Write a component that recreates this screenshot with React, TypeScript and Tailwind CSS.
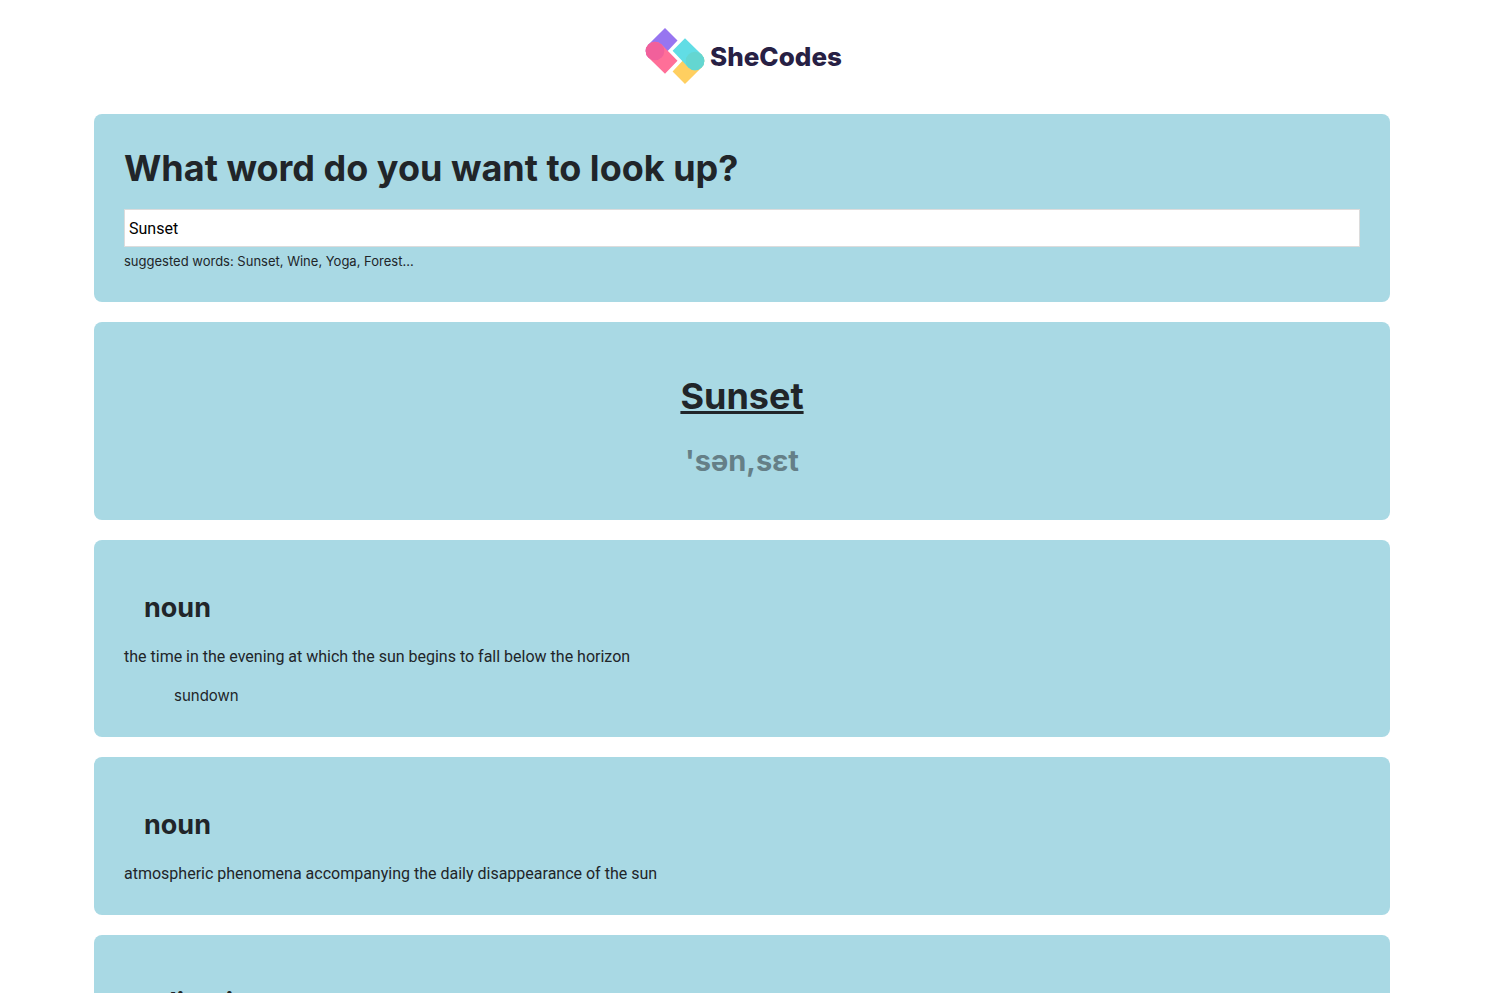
import { useState } from "react";

type Meaning = {
  partOfSpeech: string;
  definition: string;
  synonyms: string[];
};

const meanings: Meaning[] = [
  {
    partOfSpeech: "noun",
    definition:
      "the time in the evening at which the sun begins to fall below the horizon",
    synonyms: ["sundown"],
  },
  {
    partOfSpeech: "noun",
    definition:
      "atmospheric phenomena accompanying the daily disappearance of the sun",
    synonyms: [],
  },
  { partOfSpeech: "adjective", definition: "", synonyms: [] },
];

function Logo() {
  return (
    <div className="flex items-center gap-[5px] pl-[3px]">
      <svg viewBox="0 0 60 56" className="h-14 w-[60px]" aria-hidden="true">
        <path
          d="M20 0 L32.5 12.5 L16.6 29.6 A9.3 9.3 0 0 1 3.4 16.4 Z"
          fill="#9775f0"
        />
        <path
          d="M3.4 29.6 A9.3 9.3 0 0 1 16.6 16.4 L32.5 32.8 L20 45.8 Z"
          fill="#ff6f98"
        />
        <circle cx="10" cy="23" r="9.3" fill="#f1609b" />
        <path
          d="M40 56 L27.6 43.6 L43.4 26.4 A9.3 9.3 0 0 1 56.6 39.6 Z"
          fill="#ffcf60"
        />
        <path
          d="M40 10.2 L27.6 22.8 L43.4 39.6 A9.3 9.3 0 0 0 56.6 26.4 Z"
          fill="#61dde5"
        />
        <circle cx="50" cy="33" r="9.3" fill="#64d6d1" />
      </svg>
      <span className="pt-0.5 text-[26px] leading-8 font-extrabold text-[#272044]">
        SheCodes
      </span>
    </div>
  );
}

function Card({ children }: { children: React.ReactNode }) {
  return (
    <section className="rounded-lg bg-[#a9d9e4] p-[30px]">{children}</section>
  );
}

function MeaningCard({ meaning }: { meaning: Meaning }) {
  return (
    <Card>
      <h3 className="px-5 pt-[21px] pb-5 text-[27px] leading-[34px] font-bold">
        {meaning.partOfSpeech}
      </h3>
      <p className="min-h-[23px] font-['Roboto','Noto_Sans',sans-serif] text-base leading-[23px]">
        {meaning.definition}
      </p>
      {meaning.synonyms.length > 0 && (
        <ul className="mt-4 pl-[50px] text-[15px] leading-[23px]">
          {meaning.synonyms.map((synonym) => (
            <li key={synonym}>{synonym}</li>
          ))}
        </ul>
      )}
    </Card>
  );
}

export default function App() {
  const [keyword, setKeyword] = useState("Sunset");

  return (
    <div className="h-screen overflow-y-auto bg-white pr-[18px] font-['Inter','Noto_Sans',sans-serif] text-[#212529]">
      <div className="mx-auto max-w-[1320px] px-3">
        <header className="flex justify-center pt-7 pb-[30px]">
          <Logo />
        </header>
        <main className="flex flex-col gap-5">
          <Card>
            <form onSubmit={(event) => event.preventDefault()}>
              <label
                htmlFor="keyword"
                className="block text-[36px] leading-[48px] font-bold"
              >
                What word do you want to look up?
              </label>
              <input
                id="keyword"
                type="search"
                value={keyword}
                onChange={(event) => setKeyword(event.target.value)}
                className="mt-[17px] block h-[38px] w-full appearance-none border border-[#dcdcdc] bg-white px-1 font-['Roboto','Noto_Sans',sans-serif] text-base text-black outline-none"
              />
            </form>
            <p className="mt-1 pb-px text-[13px] leading-5">
              suggested words: Sunset, Wine, Yoga, Forest...
            </p>
          </Card>
          <Card>
            <div className="pt-5 pb-3 text-center">
              <h1 className="text-[36px] leading-[48px] font-bold underline">
                Sunset
              </h1>
              <h2 className="mt-6 text-[29px] leading-[34px] font-bold text-[#657f87]">
                'sən,sɛt
              </h2>
            </div>
          </Card>
          {meanings.map((meaning, index) => (
            <MeaningCard key={index} meaning={meaning} />
          ))}
        </main>
      </div>
    </div>
  );
}
